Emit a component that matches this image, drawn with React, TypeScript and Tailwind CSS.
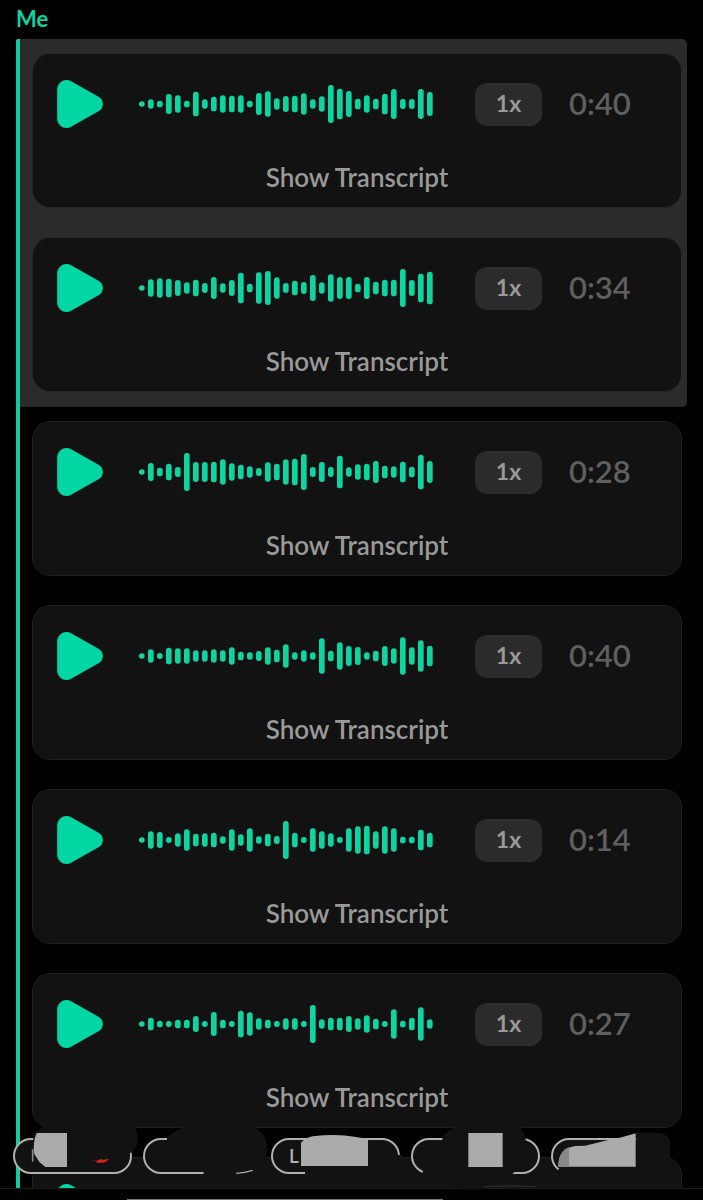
import { useState } from 'react';

type Note = {
  id: number;
  duration: string;
  bars: number[];
};

const NOTES: Note[] = [
  {
    id: 1,
    duration: '0:40',
    bars: [16, 28, 20, 60, 52, 20, 74, 28, 44, 52, 50, 52, 20, 66, 76, 34, 48, 50, 64, 28, 46, 114, 92, 78, 32, 52, 32, 62, 90, 30, 30, 90, 72],
  },
  {
    id: 2,
    duration: '0:34',
    bars: [16, 52, 58, 56, 48, 34, 50, 30, 66, 28, 48, 92, 26, 94, 102, 64, 30, 44, 36, 78, 34, 82, 66, 66, 26, 66, 38, 50, 50, 114, 48, 86, 98],
  },
  {
    id: 3,
    duration: '0:28',
    bars: [16, 54, 26, 50, 30, 114, 60, 60, 62, 76, 52, 44, 34, 24, 58, 50, 76, 80, 108, 30, 60, 30, 98, 28, 46, 50, 66, 38, 34, 62, 32, 104, 66],
  },
  {
    id: 4,
    duration: '0:40',
    bars: [16, 40, 18, 50, 46, 46, 34, 34, 40, 34, 52, 26, 22, 30, 52, 38, 70, 22, 34, 22, 106, 32, 82, 60, 54, 22, 32, 60, 46, 112, 52, 94, 62],
  },
  {
    id: 5,
    duration: '0:14',
    bars: [16, 52, 48, 18, 40, 64, 38, 40, 44, 22, 64, 34, 70, 22, 38, 24, 114, 44, 18, 70, 52, 40, 18, 70, 82, 86, 52, 82, 70, 20, 20, 62, 44],
  },
  {
    id: 6,
    duration: '0:27',
    bars: [16, 38, 20, 18, 26, 26, 48, 18, 72, 26, 18, 80, 70, 34, 26, 18, 34, 34, 18, 114, 28, 38, 38, 48, 34, 52, 32, 18, 88, 20, 38, 100, 28],
  },
];

function PlayIcon() {
  return (
    <svg viewBox="0 0 137 144" className="h-12 w-[46px] fill-[#00d6a1]" aria-hidden="true">
      <path d="M0 28A28 28 0 0 1 42 4L124 50A25 25 0 0 1 124 94L42 140A28 28 0 0 1 0 116Z" />
    </svg>
  );
}

function Waveform({ bars }: { bars: number[] }) {
  return (
    <svg viewBox="0 0 882 120" className="h-10 min-w-0 flex-1 fill-[#0fd3a0]" aria-hidden="true">
      {bars.map((h, i) => (
        <rect key={i} x={i * 27} y={60 - h / 2} width={17} height={h} rx={8} />
      ))}
    </svg>
  );
}

function VoiceNote({ note, selected = false }: { note: Note; selected?: boolean }) {
  return (
    <div className="pt-[14px] pr-[5px] pb-[15px] pl-3">
      <article
        className={`rounded-[18px] border bg-[#121212] pt-[26px] pb-[14px] ${selected ? 'border-[#272727]' : 'border-[#1f1f1f]'}`}
      >
        <div className="flex items-center pr-12 pl-6">
          <button type="button" aria-label="Play" className="shrink-0">
            <PlayIcon />
          </button>
          <div className="flex min-w-0 flex-1 pr-[42px] pl-9">
            <Waveform bars={note.bars} />
          </div>
          <button
            type="button"
            className="h-[43px] w-[67px] shrink-0 rounded-xl bg-[#2b2b2b] pb-0.5 text-[23px] font-bold text-[#999]"
          >
            1x
          </button>
          <span className="ml-[27px] w-16 shrink-0 pb-0.5 text-[31px] leading-10 font-semibold text-[#5f5f5f]">
            {note.duration}
          </span>
        </div>
        <button
          type="button"
          className="mx-auto mt-[33px] block h-8 text-[26px] leading-8 font-semibold text-[#999]"
        >
          Show Transcript
        </button>
      </article>
    </div>
  );
}

function Chip({ label, className }: { label: string; className: string }) {
  return (
    <button
      type="button"
      className={`h-9 shrink-0 rounded-full border-2 border-[#b0b0b0] bg-[#121212] pl-4 text-left text-[19px] font-semibold text-[#b0b0b0] ${className}`}
    >
      {label}
    </button>
  );
}

// Marker strokes that hide the chip names
function Scribbles() {
  return (
    <svg
      viewBox="0 0 2109 270"
      className="pointer-events-none absolute inset-x-0 bottom-0 w-full"
      aria-hidden="true"
    >
      <g fill="#121212">
        <path d="M100 72L135 46H403Q418 78 412 100L398 126L382 132V160Q370 176 340 180H130L100 150Z" />
        <path d="M501 80Q530 60 560 46H740Q782 54 795 84Q806 112 798 140L794 180L770 200H611V184L560 180L501 120Z" />
        <path d="M915 172H1160L1180 135H1206V200H915Z" />
        <path d="M1328 80Q1352 52 1382 46H1558Q1570 66 1578 82L1574 100V160L1530 198L1450 235Q1410 246 1384 230L1268 200V184L1320 150Z" />
        <path d="M1907 68H1980Q2004 74 2010 92V160L2004 200H1675V176L1907 160Z" />
      </g>
      <g fill="#ababab">
        <path d="M110 69H201V171H136L118 156L103 132Q97 100 110 69Z" />
        <path d="M903 98Q915 84 938 79Q1010 70 1068 81L1104 87V168H903Z" />
        <path d="M1405 69H1508V171H1405Z" />
        <path d="M1675 170Q1675 116 1725 108L1755 107L1825 90L1865 82L1907 70V170Z" />
      </g>
      <path d="M1675 170Q1675 124 1707 111V170Z" fill="#898989" />
      <path d="M708 190Q735 188 758 181" fill="none" stroke="#a8a8a8" strokeWidth="4" />
      <path d="M98 118V155" fill="none" stroke="#8a8a8a" strokeWidth="5" />
      <path d="M275 151L291 152L302 147L308 149L327 147L318 156L306 158H291L288 154Z" fill="#d41f1f" />
      <path d="M1450 230Q1530 226 1608 230" fill="none" stroke="#2a2a2a" strokeWidth="4" />
    </svg>
  );
}

export default function App() {
  const [notes] = useState<Note[]>(NOTES);

  return (
    <main className="relative flex h-screen flex-col overflow-hidden bg-black font-['Lato','Noto_Sans',sans-serif]">
      <h1 className="h-[39px] shrink-0 pl-4 text-[22px] leading-[38px] font-bold text-[#0fd3a0]">Me</h1>

      {/* Messages */}
      <section className="mr-4 ml-4 min-h-0 flex-1 overflow-hidden rounded-tl-xs border-l-4 border-[#15c99b]">
        <div className="rounded-r-[5px] bg-[#2b2b2b]">
          {notes.slice(0, 2).map((note) => (
            <VoiceNote key={note.id} note={note} selected />
          ))}
        </div>
        {notes.slice(2).map((note) => (
          <VoiceNote key={note.id} note={note} />
        ))}
        <div className="pt-[14px] pr-[5px] pl-3">
          <div className="rounded-t-[18px] border border-[#1f1f1f] bg-[#121212] pt-[26px] pl-6">
            <PlayIcon />
          </div>
        </div>
      </section>

      <footer className="flex h-3 shrink-0 flex-col justify-end border-t border-[#1a1a1a]">
        <div className="ml-[18%] h-px w-[45%] bg-[#777]" />
      </footer>

      {/* Chips */}
      <nav className="absolute inset-x-0 bottom-[26px] flex gap-[11px] overflow-hidden pl-[13px]">
        <Chip label="" className="w-[119px]" />
        <Chip label="" className="w-[117px]" />
        <Chip label="L" className="w-[129px]" />
        <Chip label="" className="w-[129px]" />
        <Chip label="" className="w-[118px]" />
      </nav>
      <Scribbles />
    </main>
  );
}
